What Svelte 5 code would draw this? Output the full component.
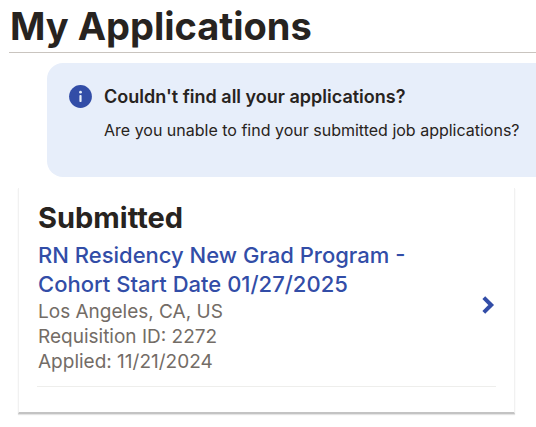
<script>
  const applications = [
    {
      title: 'RN Residency New Grad Program - Cohort Start Date 01/27/2025',
      location: 'Los Angeles, CA, US',
      requisitionId: '2272',
      applied: '11/21/2024',
    },
  ];
</script>

<main>
  <h1>My Applications</h1>

  <section class="notice">
    <svg class="info-icon" viewBox="0 0 24 24" aria-hidden="true">
      <circle cx="12.5" cy="11.5" r="11.4" fill="#324da7" />
      <circle cx="12.5" cy="7.2" r="1.4" fill="#e7eefa" />
      <rect x="11.4" y="10" width="2.2" height="7" rx="0.8" fill="#e7eefa" />
    </svg>
    <div class="notice-text">
      <h2>Couldn't find all your applications?</h2>
      <p>Are you unable to find your submitted job applications?</p>
    </div>
  </section>

  <section class="card">
    <h2>Submitted</h2>
    <ul>
      {#each applications as app}
        <li>
          <div class="details">
            <a href="#application">{app.title}</a>
            <p>{app.location}</p>
            <p>Requisition ID: {app.requisitionId}</p>
            <p>Applied: {app.applied}</p>
          </div>
          <button type="button" aria-label="View application">
            <svg viewBox="0 0 14 20" aria-hidden="true">
              <path d="M1.8 2.6 L9.2 10 L1.8 17.4" fill="none" stroke="#324da7" stroke-width="4" />
            </svg>
          </button>
        </li>
      {/each}
    </ul>
  </section>
</main>

<style>
  :global(body) {
    margin: 0;
    background: #fff;
    overflow-x: hidden;
  }

  main {
    padding-left: 9px;
    font-family: Inter, 'Liberation Sans', sans-serif;
    color: #272320;
    overflow: hidden;
  }

  h1,
  h2,
  p,
  ul {
    margin: 0;
    padding: 0;
  }

  h1 {
    padding: 1px 0 0 1px;
    font-size: 38px;
    line-height: 51px;
    font-weight: 700;
    border-bottom: 1px solid #c9c4bf;
  }

  .notice {
    display: flex;
    gap: 12px;
    margin: 10px 0 0 38px;
    padding: 20px 0 34px 21px;
    border-radius: 16px 0 0 16px;
    background: #e7eefa;
    white-space: nowrap;
  }

  .info-icon {
    flex: none;
    width: 24px;
    height: 24px;
    margin-top: 2px;
  }

  .notice h2 {
    font-size: 18px;
    line-height: 28px;
    font-weight: 600;
  }

  .notice p {
    margin-top: 6px;
    font-size: 16px;
    line-height: 26px;
  }

  .card {
    margin: 11px 21px 16px 9px;
    padding: 10px 18px 25px;
    border: 1px solid #f1f1f1;
    border-top: none;
    border-bottom: 2px solid #c3c3c3;
    box-shadow: 0 1px 1px #e4e4e4;
  }

  .card h2 {
    margin-bottom: 3px;
    padding-left: 1px;
    font-size: 29px;
    line-height: 40px;
    font-weight: 700;
  }

  ul {
    list-style: none;
  }

  li {
    display: flex;
    align-items: center;
    border-bottom: 1px solid #eeeeec;
    padding-bottom: 12px;
  }

  .details {
    flex: 1;
    padding: 0 60px 0 1px;
  }

  a {
    display: block;
    font-size: 22px;
    line-height: 29px;
    font-weight: 500;
    color: #324da7;
    text-decoration: none;
  }

  .details p {
    font-size: 19px;
    line-height: 25px;
    color: #736c66;
  }

  button {
    display: flex;
    padding: 0 0 6px;
    border: none;
    background: none;
    cursor: pointer;
  }

  button svg {
    width: 14px;
    height: 20px;
  }
</style>
